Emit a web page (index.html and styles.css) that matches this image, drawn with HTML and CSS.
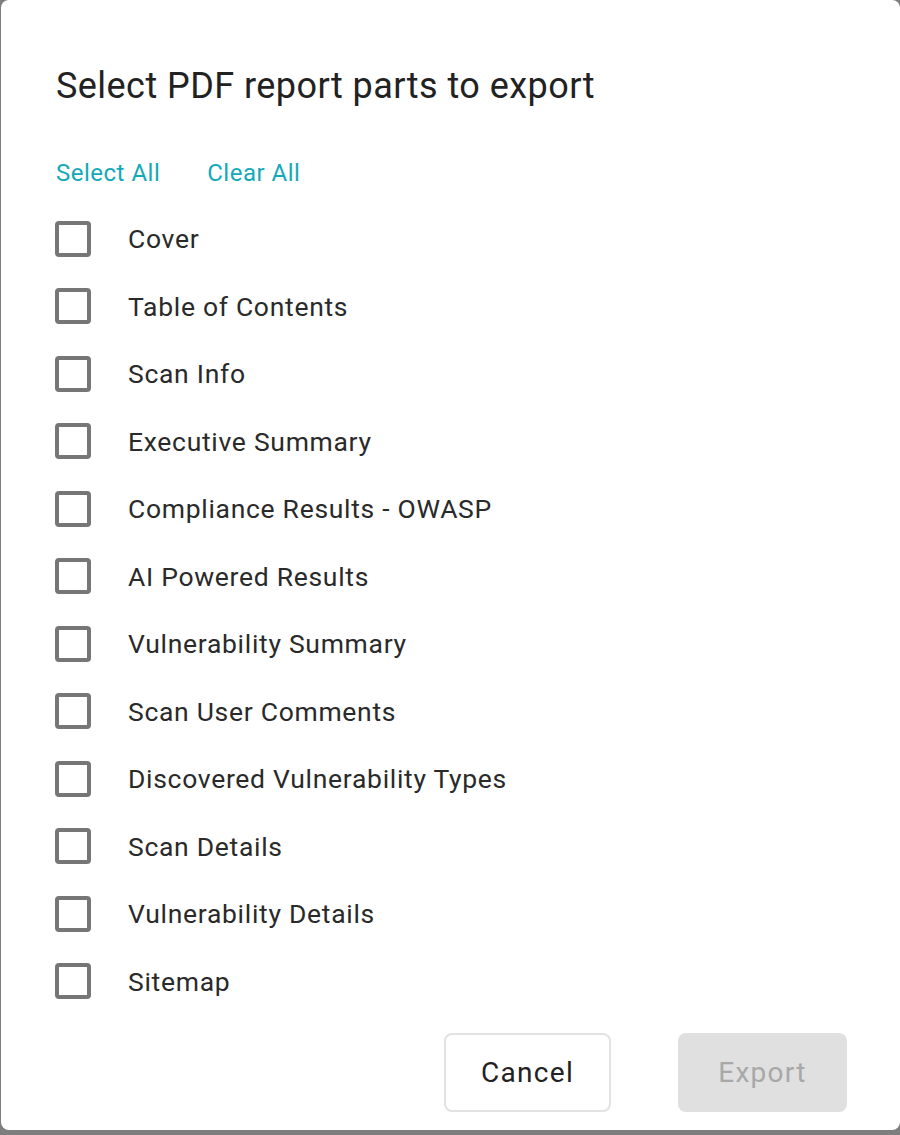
FILE: index.html
```html
<!DOCTYPE html>
<html>
<head>
<meta charset="utf-8">
<link rel="stylesheet" href="styles.css">
</head>
<body>
<div class="dialog">
  <h1 class="title">Select PDF report parts to export</h1>
  <div class="links">
    <a class="link">Select All</a>
    <a class="link">Clear All</a>
  </div>
  <ul class="list">
    <li class="row"><span class="box"></span><span class="label">Cover</span></li>
    <li class="row"><span class="box"></span><span class="label">Table of Contents</span></li>
    <li class="row"><span class="box"></span><span class="label">Scan Info</span></li>
    <li class="row"><span class="box"></span><span class="label">Executive Summary</span></li>
    <li class="row"><span class="box"></span><span class="label">Compliance Results - OWASP</span></li>
    <li class="row"><span class="box"></span><span class="label">AI Powered Results</span></li>
    <li class="row"><span class="box"></span><span class="label">Vulnerability Summary</span></li>
    <li class="row"><span class="box"></span><span class="label">Scan User Comments</span></li>
    <li class="row"><span class="box"></span><span class="label">Discovered Vulnerability Types</span></li>
    <li class="row"><span class="box"></span><span class="label">Scan Details</span></li>
    <li class="row"><span class="box"></span><span class="label">Vulnerability Details</span></li>
    <li class="row"><span class="box"></span><span class="label">Sitemap</span></li>
  </ul>
  <div class="actions">
    <button class="btn btn-cancel">Cancel</button>
    <button class="btn btn-export" disabled>Export</button>
  </div>
</div>
</body>
</html>
```
FILE: styles.css
```css
html, body {
  margin: 0;
  padding: 0;
}
body {
  background: #7e7e7e;
  width: 900px;
  height: 1135px;
  overflow: hidden;
  font-family: Roboto, "Liberation Sans", sans-serif;
}
.dialog {
  box-sizing: border-box;
  margin-left: 1px;
  width: 899px;
  height: 1130px;
  background: #ffffff;
  border-radius: 8px;
  padding: 66px 53px 0 54px;
  display: flex;
  flex-direction: column;
}
.title {
  margin: 0;
  padding-left: 1px;
  font-size: 36px;
  line-height: 40px;
  font-weight: 400;
  color: #222222;
  letter-spacing: 0.45px;
}
.links {
  margin-top: 52px;
  padding-left: 1px;
  display: flex;
  gap: 47px;
  height: 30px;
  align-items: center;
}
.link {
  font-size: 24px;
  line-height: 30px;
  color: #14a9b9;
  letter-spacing: 0.5px;
  cursor: pointer;
}
.list {
  list-style: none;
  margin: 17px 0 0 0;
  padding: 0;
}
.row {
  height: 67.5px;
  display: flex;
  align-items: center;
}
.box {
  box-sizing: border-box;
  width: 36px;
  height: 36px;
  border: 4px solid #767676;
  border-radius: 4px;
  flex: none;
}
.label {
  margin-left: 37px;
  font-size: 26.5px;
  color: #2a2a2a;
  letter-spacing: 0.7px;
}
.actions {
  margin-top: 18px;
  display: flex;
  justify-content: flex-end;
  gap: 67px;
}
.btn {
  box-sizing: border-box;
  height: 79px;
  width: 167px;
  border-radius: 8px;
  font-family: inherit;
  font-size: 28px;
  font-weight: 400;
  letter-spacing: 1.3px;
}
.btn-cancel {
  background: #ffffff;
  border: 2px solid #e2e2e2;
  color: #222222;
}
.btn-export {
  width: 169px;
  background: #e0e0e0;
  border: none;
  color: #a8a8a8;
}
```
